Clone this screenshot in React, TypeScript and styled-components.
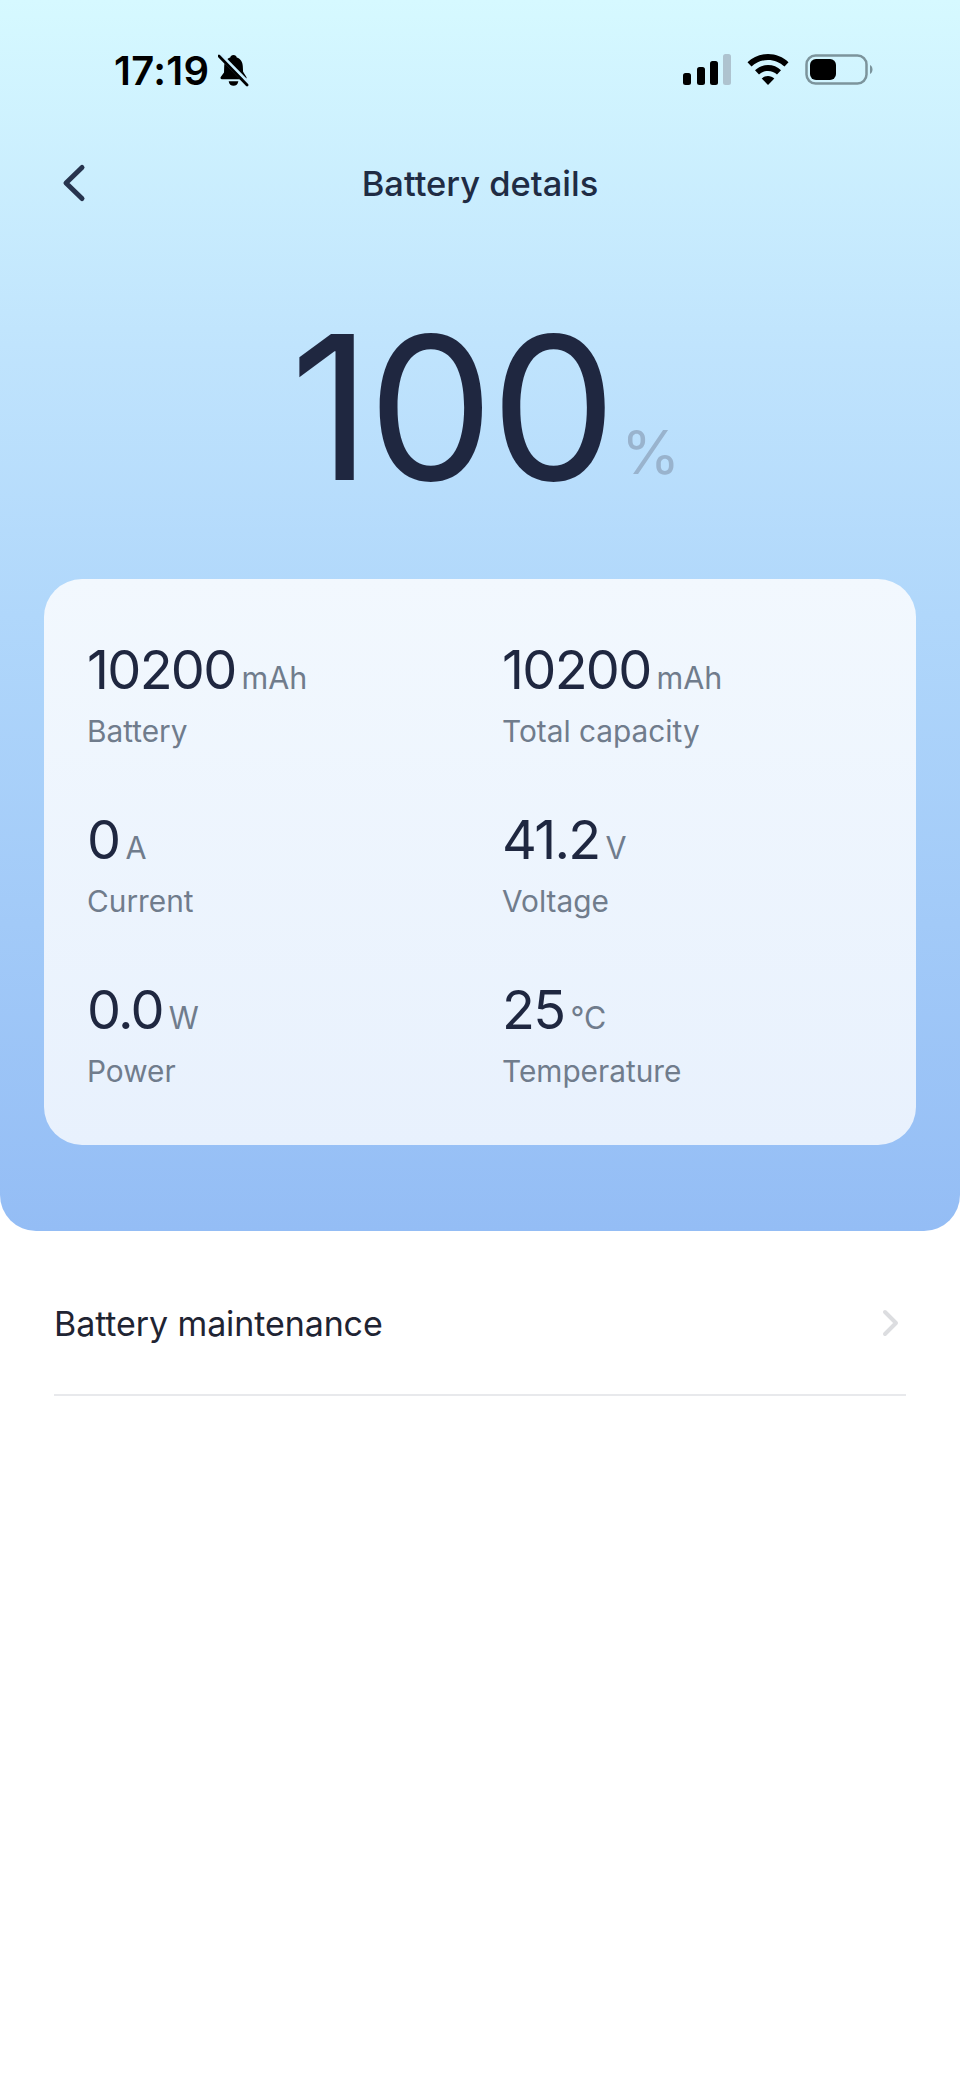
import React from "react";
import styled, { createGlobalStyle } from "styled-components";

const Global = createGlobalStyle`
  html, body { margin: 0; padding: 0; background: #fff; }
  body { font-family: Inter, "Liberation Sans", sans-serif; }
`;

const Page = styled.div`
  width: 960px;
  height: 2086px;
  background: #fff;
  overflow: hidden;
`;

const Hero = styled.div`
  height: 1231px;
  box-sizing: border-box;
  padding-top: 48px;
  border-radius: 0 0 36px 36px;
  background: linear-gradient(180deg, #d6f9ff 0%, #c0e4fd 28%, #b0d7fb 50%, #94bdf5 100%);
  display: flex;
  flex-direction: column;
`;

const StatusBar = styled.div`
  height: 44px;
  padding: 0 87px 0 114px;
  display: flex;
  align-items: center;
  justify-content: space-between;
`;

const TimeGroup = styled.div`
  display: flex;
  align-items: center;
  gap: 9px;
`;

const Time = styled.span`
  font-size: 40px;
  font-weight: 600;
  letter-spacing: 0.3px;
  color: #000;
`;

const StatusIcons = styled.div`
  display: flex;
  align-items: center;
  gap: 16px;
`;

const NavBar = styled.div`
  margin-top: 67px;
  height: 48px;
  position: relative;
  display: flex;
  align-items: center;
  justify-content: center;
`;

const BackButton = styled.button`
  position: absolute;
  left: 59px;
  top: 4px;
  padding: 0;
  border: 0;
  background: none;
  display: flex;
`;

const Title = styled.h1`
  margin: 0;
  font-size: 34.5px;
  font-weight: 500;
  color: #1f2c44;
`;

const Level = styled.div`
  margin-top: 80px;
  height: 240px;
  display: flex;
  justify-content: center;
  align-items: flex-end;
  padding-left: 10px;
`;

const LevelValue = styled.span`
  font-size: 200px;
  line-height: 240px;
  font-weight: 420;
  color: #1f2740;
  letter-spacing: -3.5px;
`;

const LevelUnit = styled.span`
  margin: 0 0 45px 8px;
  font-size: 60px;
  line-height: 60px;
  color: #99b3cd;
`;

const Card = styled.div`
  margin: 52px 44px 0;
  height: 566px;
  box-sizing: border-box;
  padding: 61px 43px 0;
  border-radius: 38px;
  background: linear-gradient(180deg, #f2f8fe 0%, #e8f1fd 100%);
  display: grid;
  grid-template-columns: 415px 1fr;
  grid-auto-rows: 170px;
`;

const Stat = styled.div`
  display: flex;
  flex-direction: column;
`;

const StatValue = styled.div`
  display: flex;
  align-items: baseline;
  gap: 6px;
  height: 60px;
  line-height: 60px;
`;

const Number = styled.span`
  font-size: 54px;
  font-weight: 420;
  letter-spacing: -1.7px;
  color: #1f2740;
`;

const Unit = styled.span`
  font-size: 30.5px;
  color: #707c8c;
`;

const StatLabel = styled.div`
  margin-top: 11px;
  font-size: 29.8px;
  line-height: 40px;
  color: #707c8c;
`;

const MenuRow = styled.div`
  margin: 40px 54px 0;
  height: 104px;
  padding-bottom: 19px;
  border-bottom: 2px solid #e8e9ec;
  display: flex;
  align-items: center;
  justify-content: space-between;
`;

const MenuLabel = styled.span`
  font-size: 34px;
  letter-spacing: -0.1px;
  color: #1f2433;
`;

const MenuChevron = styled.span`
  display: flex;
  margin-right: 5px;
`;

const stats = [
  { value: "10200", unit: "mAh", label: "Battery" },
  { value: "10200", unit: "mAh", label: "Total capacity" },
  { value: "0", unit: "A", label: "Current" },
  { value: "41.2", unit: "V", label: "Voltage" },
  { value: "0.0", unit: "W", label: "Power" },
  { value: "25", unit: "°C", label: "Temperature" },
];

const BellOff = () => (
  <svg width="31" height="33" viewBox="0 0 32 34">
    <path
      d="M16 1c2 0 3 1.2 3.4 2.6 4 1.200 6 4.600 6.200 9l.3 5.600 3.400 5.600c.6 1-.1 2.200-1.200 2.200H4c-1.200 0-1.800-1.200-1.200-2.200l3.400-4.800.2-6.400c.2-4.400 2.400-7.800 6.200-9C13 2.200 14 1 16 1Z"
      fill="#000"
    />
    <path d="M11 28h10c-.4 3-2.400 4.800-5 4.800S11.400 31 11 28Z" fill="#000" />
    <path d="M3 .5 32 30" stroke="#c9eefe" strokeWidth="3" />
    <path d="M3.500 4.500 31 33" stroke="#c9eefe" strokeWidth="2.500" />
    <path d="M1 2 30 32" stroke="#000" strokeWidth="2.800" strokeLinecap="round" />
  </svg>
);

const SignalIcon = () => (
  <svg width="48" height="32" viewBox="0 0 48 32">
    <rect x="0" y="19" width="8" height="12" rx="2.500" fill="#000" />
    <rect x="14" y="13" width="8" height="18" rx="2.500" fill="#000" />
    <rect x="27" y="7" width="8" height="24" rx="2.500" fill="#000" />
    <rect x="40" y="0" width="8" height="31" rx="2.500" fill="#aec3cf" />
  </svg>
);

const WifiIcon = () => (
  <svg width="42" height="32" viewBox="0 0 42 32">
    <path d="M21 0c8 0 15 3 20.500 8.200l-4 4.400C33 8.500 27.300 6 21 6S9 8.500 4.500 12.600L.5 8.200C6 3 13 0 21 0Z" fill="#000" />
    <path d="M21 11c5 0 9.500 1.900 13 5.200l-4 4.300C27.600 18.300 24.500 17 21 17s-6.600 1.300-9 3.500l-4-4.300C11.500 12.900 16 11 21 11Z" fill="#000" />
    <path d="M21 22c2.400 0 4.600.9 6.300 2.500L21 31l-6.300-6.500C16.400 22.900 18.600 22 21 22Z" fill="#000" />
  </svg>
);

const BatteryIcon = () => (
  <svg width="68" height="32" viewBox="0 0 68 32">
    <rect x="1.500" y="1.500" width="60" height="28" rx="9" fill="none" stroke="#7c949c" strokeWidth="2.500" />
    <rect x="5" y="5" width="26" height="21" rx="6" fill="#000" />
    <path d="M65 11c1.600.6 2.500 2.500 2.500 4.500S66.600 19.400 65 20Z" fill="#7c949c" />
  </svg>
);

const App = () => (
  <Page>
    <Global />
    <Hero>
      <StatusBar>
        <TimeGroup>
          <Time>17:19</Time>
          <BellOff />
        </TimeGroup>
        <StatusIcons>
          <SignalIcon />
          <WifiIcon />
          <BatteryIcon />
        </StatusIcons>
      </StatusBar>
      <NavBar>
        <BackButton aria-label="Back">
          <svg width="30" height="40" viewBox="0 0 30 40">
            <path d="M23 4.500 7 20l16 15.500" fill="none" stroke="#27344e" strokeWidth="5" strokeLinecap="round" strokeLinejoin="round" />
          </svg>
        </BackButton>
        <Title>Battery details</Title>
      </NavBar>
      <Level>
        <LevelValue>100</LevelValue>
        <LevelUnit>%</LevelUnit>
      </Level>
      <Card>
        {stats.map((s) => (
          <Stat key={s.label}>
            <StatValue>
              <Number>{s.value}</Number>
              <Unit>{s.unit}</Unit>
            </StatValue>
            <StatLabel>{s.label}</StatLabel>
          </Stat>
        ))}
      </Card>
    </Hero>
    <MenuRow>
      <MenuLabel>Battery maintenance</MenuLabel>
      <MenuChevron>
        <svg width="20" height="30" viewBox="0 0 20 30">
          <path d="M4 4l11 11L4 26" fill="none" stroke="#dcdde0" strokeWidth="4" strokeLinecap="round" strokeLinejoin="round" />
        </svg>
      </MenuChevron>
    </MenuRow>
  </Page>
);

export default App;
